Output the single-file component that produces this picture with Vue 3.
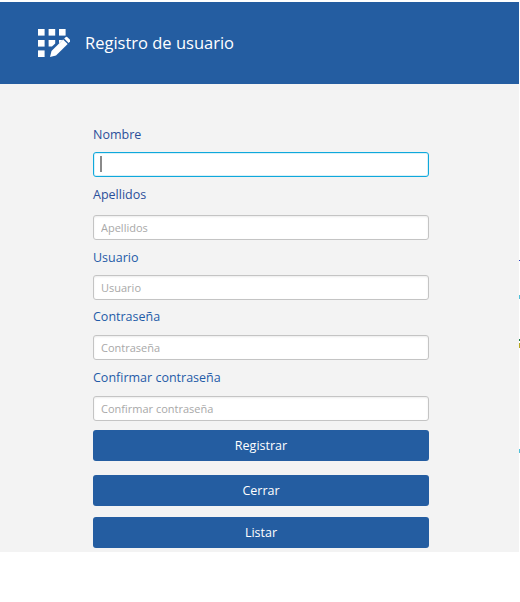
<script setup>
const fields = [
  { label: 'Nombre', placeholder: '', cls: 'f-nombre', focused: true },
  { label: 'Apellidos', placeholder: 'Apellidos', cls: 'f-apellidos' },
  { label: 'Usuario', placeholder: 'Usuario', cls: 'f-usuario' },
  { label: 'Contraseña', placeholder: 'Contraseña', cls: 'f-contrasena' },
  { label: 'Confirmar contraseña', placeholder: 'Confirmar contraseña', cls: 'f-confirmar' }
]
const specks = [
  { top: 260, height: 1, background: '#2a3fc0' },
  { top: 295, height: 4, background: '#4fc0d8' },
  { top: 339, height: 2, background: '#1f7a4a' },
  { top: 343, height: 5, background: '#b8a820' },
  { top: 449, height: 4, background: '#4fc0d8' }
]
</script>

<template>
  <div class="page">
    <header class="header">
      <svg class="logo" width="32" height="30" viewBox="0 0 32 30" aria-hidden="true">
        <g fill="#fff">
          <rect x="0" y="0" width="6.6" height="6.6" />
          <rect x="10.6" y="0" width="6.6" height="6.6" />
          <rect x="21" y="0" width="6.6" height="6.6" />
          <rect x="0" y="11" width="6.6" height="6.6" />
          <path d="M10.6 11h6.6v3.4l-3.2 3.2h-3.4z" />
          <path d="M21 11h3.6L21 14.6z" />
          <rect x="0" y="21.4" width="6.6" height="6.6" />
          <path d="M12 28l1.5-6 11.6-11.4 4.6 4.5L18 26.6z" />
          <path d="M26.2 9.6l1.6-1.6a1 1 0 0 1 1.4 0l3 3a1 1 0 0 1 0 1.4l-1.6 1.6z" />
        </g>
      </svg>
      <h1 class="title">Registro de usuario</h1>
    </header>

    <main class="content">
      <form class="form" @submit.prevent>
        <div v-for="f in fields" :key="f.label" class="field" :class="f.cls">
          <label class="label">{{ f.label }}</label>
          <div class="control" :class="{ focused: f.focused }">
            <input class="input" type="text" :placeholder="f.placeholder" />
            <span v-if="f.focused" class="caret"></span>
          </div>
        </div>
        <button class="btn btn-registrar" type="button">Registrar</button>
        <button class="btn btn-cerrar" type="button">Cerrar</button>
        <button class="btn btn-listar" type="button">Listar</button>
      </form>
    </main>

    <i v-for="(s, i) in specks" :key="i" class="speck" :style="{ top: s.top + 'px', height: s.height + 'px', background: s.background }"></i>
  </div>
</template>

<style>
html, body { margin: 0; background: #fff; }
</style>

<style scoped>
.page {
  position: relative;
  width: 520px;
  height: 602px;
  box-sizing: border-box;
  padding-top: 2px;
  background: #fff;
  font-family: "Open Sans", "Noto Sans", sans-serif;
  overflow: hidden;
}
.header {
  width: 519px;
  height: 82px;
  background: #245da1;
  display: flex;
  align-items: center;
  padding-left: 38px;
  box-sizing: border-box;
}
.logo { flex: none; margin-top: 1px; margin-right: 15px; }
.title {
  margin: 0;
  font-weight: 400;
  font-size: 16.5px;
  line-height: 24px;
  color: #fff;
}
.content {
  width: 519px;
  height: 468px;
  background: #f3f3f3;
  padding: 41px 0 0 93px;
  box-sizing: border-box;
}
.form { width: 336px; display: flex; flex-direction: column; }
.field { display: flex; flex-direction: column; }
.label {
  font-size: 12.5px;
  line-height: 20px;
  height: 20px;
  color: #2b4f9a;
}
.f-usuario .label, .f-contrasena .label, .f-confirmar .label { color: #1f5ba8; }
.control { position: relative; height: 25px; margin-top: 7px; }
.f-apellidos { margin-top: 8px; }
.f-apellidos .control { margin-top: 10px; }
.f-usuario { margin-top: 8px; }
.f-usuario .control { margin-top: 7px; }
.f-contrasena { margin-top: 7px; }
.f-contrasena .control { margin-top: 8px; }
.f-confirmar { margin-top: 8px; }
.f-confirmar .control { margin-top: 8px; }
.input {
  width: 100%;
  height: 100%;
  box-sizing: border-box;
  border: 1px solid #c4c4c4;
  border-radius: 3px;
  background: #fff;
  padding: 0 7px;
  font-family: inherit;
  font-size: 11px;
  color: #555;
  outline: none;
  box-shadow: inset 0 1px 2px rgba(0, 0, 0, 0.08);
}
.input::placeholder { color: #a8a8a8; opacity: 1; }
.focused .input {
  border: 1px solid #0fa8dc;
  box-shadow: inset 0 0 0 1px #d8f1f8;
}
.caret {
  position: absolute;
  left: 7px;
  top: 4px;
  width: 2px;
  height: 16px;
  background: #8a8a8a;
}
.btn {
  display: block;
  width: 100%;
  height: 31px;
  border: 0;
  border-radius: 3px;
  background: #245da1;
  color: #fff;
  font-family: inherit;
  font-size: 12.5px;
  padding: 0;
}
.btn-registrar { margin-top: 9px; }
.btn-cerrar { margin-top: 14px; }
.btn-listar { margin-top: 11px; }
.speck { position: absolute; left: 519px; width: 1px; }
</style>
